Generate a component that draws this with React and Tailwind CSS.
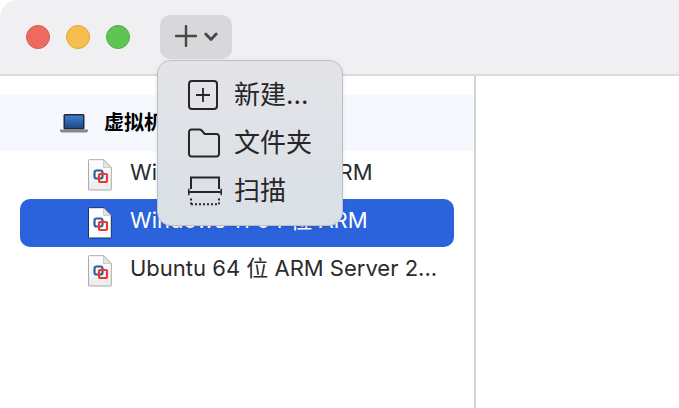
const FONT = "font-['Inter','Noto_Sans_CJK_SC',sans-serif]";

function VmIcon({ selected }) {
  return (
    <svg width="24" height="32" viewBox="0 0 24 32" className="shrink-0">
      <defs>
        <linearGradient id="pg" x1="0" y1="0" x2="0" y2="1">
          <stop offset="0" stopColor="#ffffff" />
          <stop offset="1" stopColor="#ececec" />
        </linearGradient>
      </defs>
      <path d="M1.300 .7h14.700l7.300 7.800V30.200a.8.8 0 0 1-.8.8H1.300a.8.8 0 0 1-.8-.8V1.500a.8.8 0 0 1 .8-.8z" fill={selected ? "#ffffff" : "url(#pg)"} stroke={selected ? "#17306b" : "#a9a9a9"} strokeWidth="1" />
      <path d="M15.500 1v7.500h7.500z" fill="#e4e4e4" stroke="#c4c4c4" strokeWidth="0.8" />
      <rect x="6.500" y="11.500" width="8" height="8" rx="2" fill="none" stroke="#2f5f9e" strokeWidth="2.200" />
      <rect x="11" y="15" width="8" height="8" rx="1" fill="none" stroke="#e8392a" strokeWidth="2.200" />
    </svg>
  );
}

function Laptop() {
  return (
    <svg width="28" height="19" viewBox="0 0 28 19">
      <defs>
        <linearGradient id="sc" x1="0" y1="0" x2="0" y2="1">
          <stop offset="0" stopColor="#3f7fd0" />
          <stop offset="1" stopColor="#1c4a86" />
        </linearGradient>
      </defs>
      <rect x="3.500" y="0" width="21" height="15.500" rx="1.500" fill="#26292e" />
      <rect x="5" y="1.500" width="18" height="12.500" fill="url(#sc)" />
      <path d="M0 15.500h28v1a2 2 0 0 1-2 2H2a2 2 0 0 1-2-2z" fill="#85888d" />
    </svg>
  );
}

function Row({ label, selected }) {
  return (
    <div className={`h-12 mx-5 rounded-[10px] flex items-center pl-[68px] pr-4 gap-[18px] ${selected ? "bg-[#2a63db] text-white" : "text-[#2b2b2b]"}`}>
      <VmIcon selected={selected} />
      <span className="text-[22px] leading-none whitespace-nowrap mb-[6px]">{label}</span>
    </div>
  );
}

function MenuItem({ icon, label }) {
  return (
    <div className="h-12 flex items-center gap-[14px] pl-[30px] text-[#262628]">
      <span className="w-[32px] h-[32px] flex items-center justify-start shrink-0">{icon}</span>
      <span className="text-[26px] leading-none whitespace-nowrap">{label}</span>
    </div>
  );
}

export default function App() {
  return (
    <div className={`relative w-[679px] h-[408px] overflow-hidden bg-white ${FONT}`}>
      <div className="h-[76px] bg-[#f0f0f3] border-b-2 border-[#dcdcdc] rounded-tl-[18px] flex items-center pl-[26px]">
        <div className="flex items-center gap-4">
          <span className="w-6 h-6 rounded-full bg-[#ee6a5f] border border-[#d9594f]" />
          <span className="w-6 h-6 rounded-full bg-[#f6be4f] border border-[#dfa63c]" />
          <span className="w-6 h-6 rounded-full bg-[#5fc454] border border-[#4fae45]" />
        </div>
        <div className="ml-[30px] w-[72px] h-[44px] rounded-[10px] bg-[#d8d8da] flex items-center justify-center gap-[7px]">
          <svg width="22" height="22" viewBox="0 0 22 22" className="-mt-[3px]">
            <path d="M11 1v20M1 11h20" stroke="#47474a" strokeWidth="2.400" strokeLinecap="round" />
          </svg>
          <svg width="14" height="10" viewBox="0 0 14 10">
            <path d="M1.800 2l5.200 5.500L12.200 2" fill="none" stroke="#47474a" strokeWidth="2.800" strokeLinecap="round" strokeLinejoin="round" />
          </svg>
        </div>
      </div>

      <div className="flex h-[332px]">
        <div className="w-[474px] pt-[19px]">
          <div className="h-14 bg-[#f5f8fd] flex items-center pl-[60px] gap-[16px]">
            <Laptop />
            <span className="text-[20px] font-bold text-black leading-none">虚拟机</span>
          </div>
          <div className="flex flex-col">
            <Row label="Windows 10 64 位 ARM" />
            <Row label="Windows 11 64 位 ARM" selected />
            <Row label="Ubuntu 64 位 ARM Server 2..." />
          </div>
        </div>
        <div className="w-0.5 bg-[#d4d4d4]" />
        <div className="flex-1 bg-white" />
      </div>

      <div className="absolute left-[157px] top-[60px] w-[186px] h-[166px] rounded-[14px] border border-[#bdbfc2] bg-gradient-to-b from-[#e4e4e8] to-[#d9e0e6] shadow-[0_1px_4px_rgba(0,0,0,0.1)] pt-[10px]">
        <MenuItem
          label="新建..."
          icon={
            <svg width="30" height="30" viewBox="0 0 30 30">
              <rect x="1" y="1" width="28" height="28" rx="3" fill="none" stroke="#262628" strokeWidth="2" />
              <path d="M15 8v14M8 15h14" stroke="#262628" strokeWidth="1.800" />
            </svg>
          }
        />
        <MenuItem
          label="文件夹"
          icon={
            <svg width="32" height="30" viewBox="0 0 32 30">
              <path d="M1 26V4a2.500 2.500 0 0 1 2.500-2.500h8a3 3 0 0 1 2.200 1l3 3.500h11.800A2.500 2.500 0 0 1 31 8.500V26a2.500 2.500 0 0 1-2.500 2.500h-25A2.500 2.500 0 0 1 1 26z" fill="none" stroke="#262628" strokeWidth="2" />
            </svg>
          }
        />
        <MenuItem
          label="扫描"
          icon={
            <svg width="34" height="30" viewBox="0 0 34 30" className="shrink-0">
              <path d="M3 13V1.500h28V13" fill="none" stroke="#262628" strokeWidth="2" />
              <path d="M.8 16h32.400" stroke="#262628" strokeWidth="2" />
              <path d="M.8 12.800v6.400M33.200 12.800v6.400" stroke="#262628" strokeWidth="1.500" />
              <path d="M3 22.500v5.700" fill="none" stroke="#262628" strokeWidth="2" strokeDasharray="2 2" />
              <path d="M31 22.500v5.700" fill="none" stroke="#262628" strokeWidth="2" strokeDasharray="2 2" />
              <path d="M3 28.200h28" fill="none" stroke="#262628" strokeWidth="2" strokeDasharray="2 2" />
            </svg>
          }
        />
      </div>
    </div>
  );
}
